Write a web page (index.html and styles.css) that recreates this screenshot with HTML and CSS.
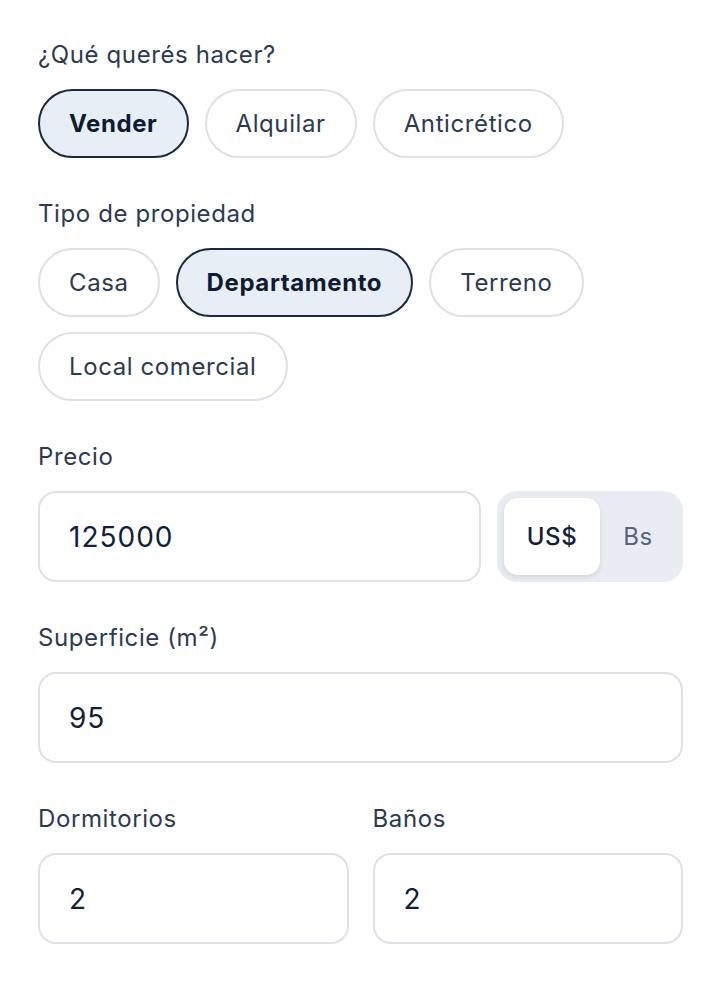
FILE: index.html
```html
<!DOCTYPE html>
<html lang="es">
<head>
<meta charset="utf-8">
<title>Publicar propiedad</title>
<link rel="stylesheet" href="styles.css">
</head>
<body>
<main class="form">
  <section class="field">
    <div class="label">¿Qué querés hacer?</div>
    <div class="chips">
      <button class="chip chip--active">Vender</button>
      <button class="chip">Alquilar</button>
      <button class="chip">Anticrético</button>
    </div>
  </section>

  <section class="field">
    <div class="label">Tipo de propiedad</div>
    <div class="chips">
      <button class="chip">Casa</button>
      <button class="chip chip--active">Departamento</button>
      <button class="chip">Terreno</button>
      <button class="chip">Local comercial</button>
    </div>
  </section>

  <section class="field">
    <div class="label">Precio</div>
    <div class="price-row">
      <div class="input">125000</div>
      <div class="toggle">
        <button class="toggle-btn toggle-btn--active">US$</button>
        <button class="toggle-btn">Bs</button>
      </div>
    </div>
  </section>

  <section class="field">
    <div class="label">Superficie (m²)</div>
    <div class="input">95</div>
  </section>

  <section class="field two-col">
    <div class="col">
      <div class="label">Dormitorios</div>
      <div class="input">2</div>
    </div>
    <div class="col">
      <div class="label">Baños</div>
      <div class="input">2</div>
    </div>
  </section>
</main>
</body>
</html>
```

FILE: styles.css
```css
* { box-sizing: border-box; }

html, body {
  margin: 0;
  padding: 0;
  background: #ffffff;
}

body {
  font-family: Inter, "Noto Sans", "Liberation Sans", sans-serif;
  color: #1a2740;
}

.form {
  padding: 39px 37px 40px 38px;
  display: flex;
  flex-direction: column;
  gap: 40px;
}

.field {
  display: flex;
  flex-direction: column;
}

.label {
  font-size: 24px;
  line-height: 32px;
  letter-spacing: 0.6px;
  color: #2c3a52;
  margin-bottom: 18px;
}

.chips {
  display: flex;
  flex-wrap: wrap;
  gap: 15px 16px;
}

.chip {
  font-family: inherit;
  font-size: 24px;
  line-height: 32px;
  letter-spacing: 0.6px;
  height: 69px;
  padding: 0 29px;
  border: 2px solid #dce1e8;
  border-radius: 999px;
  background: #ffffff;
  color: #2c3a52;
  cursor: pointer;
}

.chip--active {
  background: #e8eef6;
  border-color: #1b2841;
  color: #0f1b31;
  font-weight: 700;
}

.input {
  height: 91px;
  border: 2px solid #dde1e8;
  border-radius: 18px;
  padding: 0 29px;
  display: flex;
  align-items: center;
  font-size: 28px;
  letter-spacing: 1px;
  color: #12213b;
  background: #ffffff;
}

.price-row {
  display: flex;
  gap: 16px;
}

.price-row .input {
  flex: 1;
}

.toggle {
  width: 186px;
  height: 91px;
  background: #e9edf3;
  border-radius: 20px;
  padding: 7px;
  display: flex;
}

.toggle-btn {
  font-family: inherit;
  font-size: 24px;
  letter-spacing: 0.6px;
  border: none;
  background: transparent;
  color: #56637b;
  border-radius: 14px;
  width: 76px;
  cursor: pointer;
  padding: 0;
}

.toggle-btn--active {
  width: 96px;
  background: #ffffff;
  color: #12213b;
  font-weight: 500;
  box-shadow: 0 2px 5px rgba(20, 35, 60, 0.12);
}

.two-col {
  flex-direction: row;
  gap: 24px;
}

.col {
  flex: 1;
  display: flex;
  flex-direction: column;
}
```
